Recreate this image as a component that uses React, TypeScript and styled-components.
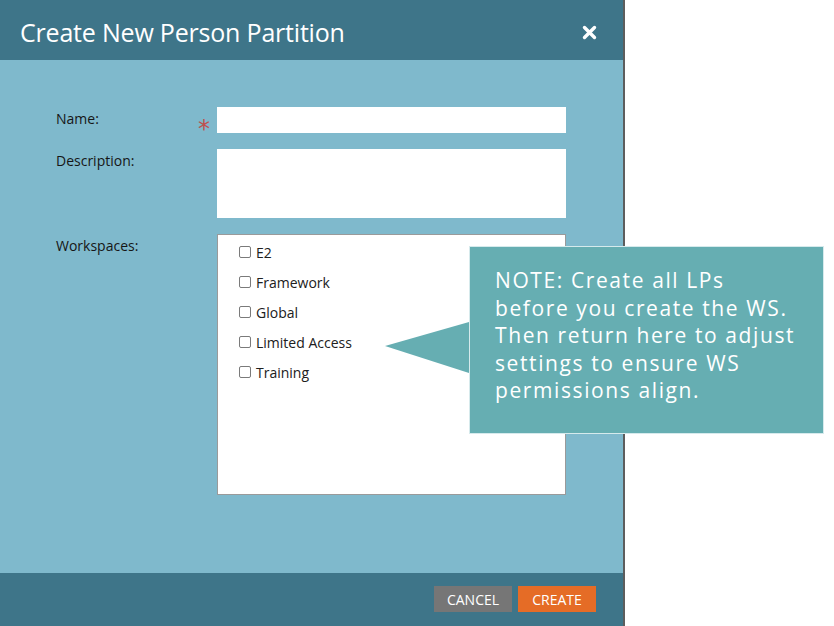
import React from 'react'
import styled, { createGlobalStyle } from 'styled-components'

const GlobalStyle = createGlobalStyle`
  html, body {
    margin: 0;
    padding: 0;
    background: #ffffff;
  }
  body {
    font-family: 'Open Sans', 'Liberation Sans', sans-serif;
  }
`

const Page = styled.div`
  position: relative;
  width: 834px;
  height: 626px;
  overflow: hidden;
`

const Dialog = styled.div`
  box-sizing: border-box;
  width: 625px;
  height: 626px;
  display: flex;
  flex-direction: column;
  border-right: 2px solid #5d5d5d;
  background: #7fb9cc;
`

const Header = styled.div`
  box-sizing: border-box;
  height: 60px;
  display: flex;
  align-items: center;
  justify-content: space-between;
  padding: 4px 26px 0 20px;
  background: #3e7589;
`

const Title = styled.h1`
  margin: 0;
  font-family: 'Open Sans', sans-serif;
  font-size: 25px;
  font-weight: 400;
  letter-spacing: -0.2px;
  color: #ffffff;
`

const CloseButton = styled.button`
  display: flex;
  padding: 0;
  border: none;
  background: transparent;
  cursor: pointer;
`

const Body = styled.div`
  flex: 1;
  padding: 47px 0 0 56px;
`

const Form = styled.div`
  display: grid;
  grid-template-columns: 142px 19px 349px;
  align-items: start;
  row-gap: 16px;
`

const Label = styled.label`
  font-size: 14px;
  line-height: 24px;
  color: #161616;
`

const Required = styled.span`
  height: 26px;
  font-family: 'DejaVu Sans', sans-serif;
  font-size: 24px;
  line-height: 44px;
  color: #c0504d;
`

const Field = styled.div<{ h: number; bordered?: boolean }>`
  box-sizing: border-box;
  height: ${({ h }) => h}px;
  background: #ffffff;
  border: ${({ bordered }) => (bordered ? '1px solid #9a9a9a' : 'none')};
`

const CheckList = styled.div`
  padding: 2px 0 0 21px;
`

const CheckRow = styled.div`
  display: flex;
  align-items: center;
  gap: 5px;
  height: 30px;
  font-size: 14px;
  color: #202020;
`

const Box = styled.span`
  box-sizing: border-box;
  width: 12px;
  height: 12px;
  border: 1px solid #7a7a7a;
  border-radius: 2px;
  background: #ffffff;
`

const Footer = styled.div`
  box-sizing: border-box;
  height: 53px;
  display: flex;
  justify-content: flex-end;
  align-items: flex-start;
  gap: 6px;
  padding: 13px 27px 0 0;
  background: #3e7589;
`

const Button = styled.button<{ primary?: boolean }>`
  width: 78px;
  height: 26px;
  border: none;
  padding: 0;
  font-family: 'Open Sans', sans-serif;
  font-size: 14px;
  color: #ffffff;
  text-transform: uppercase;
  background: ${({ primary }) => (primary ? '#e56c26' : '#767676')};
`

const Callout = styled.div`
  position: absolute;
  left: 469px;
  top: 246px;
  box-sizing: border-box;
  width: 355px;
  height: 188px;
  padding: 20px 0 0 25px;
  border: 1px solid #d6eaec;
  background: #66aeb2;
  font-family: 'Open Sans', sans-serif;
  font-size: 21px;
  line-height: 27.5px;
  letter-spacing: 1.6px;
  color: #ffffff;
  white-space: pre-line;

  &::before {
    content: '';
    position: absolute;
    left: -85px;
    top: 75px;
    border-top: 24px solid transparent;
    border-bottom: 27px solid transparent;
    border-right: 84px solid #66aeb2;
  }
`

const workspaces = ['E2', 'Framework', 'Global', 'Limited Access', 'Training']

export default function App() {
  return (
    <Page>
      <GlobalStyle />
      <Dialog>
        <Header>
          <Title>Create New Person Partition</Title>
          <CloseButton aria-label="Close">
            <svg width="15" height="15" viewBox="0 0 15 15">
              <path d="M2.5 2.5 L12.5 12.5 M12.5 2.5 L2.5 12.5" stroke="#ffffff" strokeWidth="3.4" strokeLinecap="round" />
            </svg>
          </CloseButton>
        </Header>
        <Body>
          <Form>
            <Label>Name:</Label>
            <Required>*</Required>
            <Field h={26} />
            <Label>Description:</Label>
            <span />
            <Field h={69} />
            <Label>Workspaces:</Label>
            <span />
            <Field h={261} bordered>
              <CheckList>
                {workspaces.map((w) => (
                  <CheckRow key={w}>
                    <Box />
                    {w}
                  </CheckRow>
                ))}
              </CheckList>
            </Field>
          </Form>
        </Body>
        <Footer>
          <Button>Cancel</Button>
          <Button primary>Create</Button>
        </Footer>
      </Dialog>
      <Callout>
        {'NOTE: Create all LPs\nbefore you create the WS.\nThen return here to adjust\nsettings to ensure WS\npermissions align.'}
      </Callout>
    </Page>
  )
}
